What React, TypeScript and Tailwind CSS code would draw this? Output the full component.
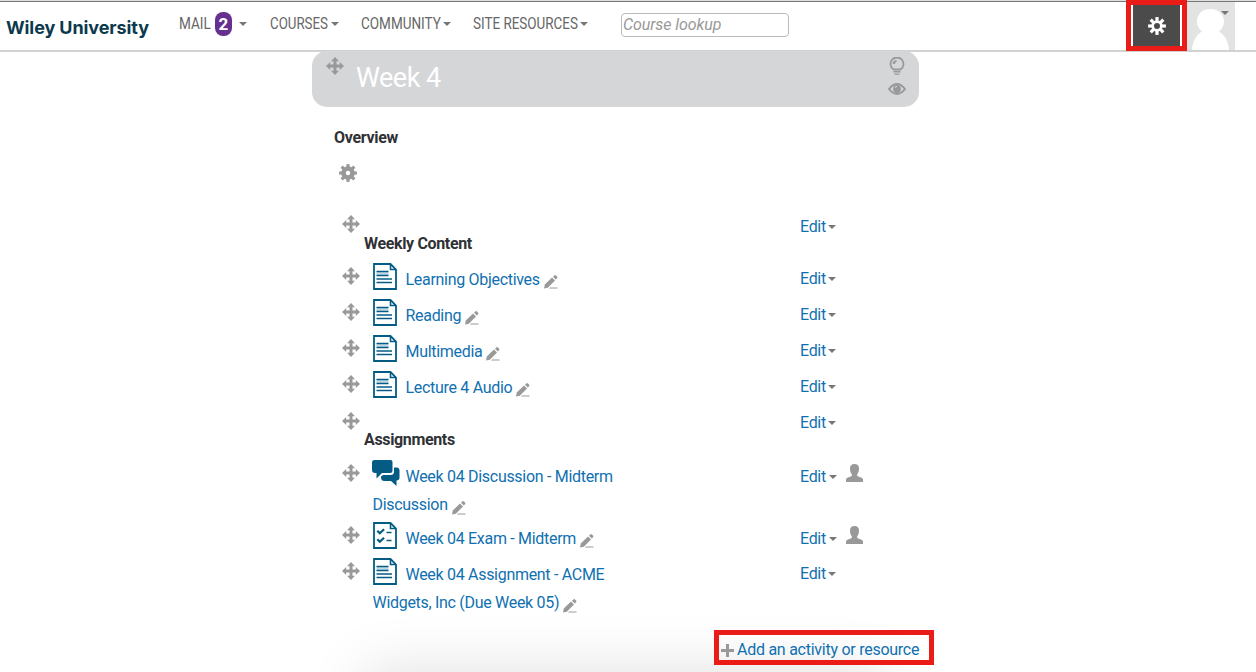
import React from "react";

function Caret({ className = "" }: { className?: string }) {
  return (
    <svg viewBox="0 0 8 4" className={`h-1 w-2 shrink-0 fill-[#777] ${className}`}>
      <path d="M0 0h8L4 4z" />
    </svg>
  );
}

function MoveIcon({ className = "" }: { className?: string }) {
  return (
    <svg viewBox="0 0 18 18" className={`size-[18px] shrink-0 fill-[#999] ${className}`}>
      <path d="M9 0l4 4.2h-2.500v3.300h3.300V5L18 9l-4.200 4v-2.500h-3.300v3.300H13L9 18l-4-4.200h2.500v-3.300H4.200V13L0 9l4.200-4v2.500h3.300V4.200H5z" />
    </svg>
  );
}

function GearIcon({ className = "", hole = 2.2 }: { className?: string; hole?: number }) {
  const outer = hole > 2.5 ? 5.7 : 6.8;
  return (
    <svg viewBox="0 0 18 18" className={`size-[18px] shrink-0 ${className}`} fill="none" stroke="currentColor">
      <circle cx="9" cy="9" r={(hole + outer) / 2} strokeWidth={outer - hole} />
      {[0, 45, 90, 135, 180, 225, 270, 315].map((angle) => (
        <path key={angle} d="M9 0.1v4" strokeWidth="3.200" transform={`rotate(${angle} 9 9)`} />
      ))}
    </svg>
  );
}

function PageIcon({ quiz = false }: { quiz?: boolean }) {
  return (
    <svg viewBox="0 0 24 27" className="h-[27px] w-6 shrink-0" fill="none" stroke="#045c84">
      <path d="M1 1h16.500L23 6.500V26H1z" strokeWidth="1.800" />
      <path d="M17.500 1v5.500H23" strokeWidth="1.600" />
      {quiz ? (
        <>
          <path d="M4.300 8.800l2.500 2.500 4.300-4M4.300 17.300l2.500 2.500 4.300-4" strokeWidth="2.200" />
          <path d="M13.500 10.500h5M13.500 18.500h5" strokeWidth="1.500" />
        </>
      ) : (
        <>
          <path d="M3.500 10.500h12" stroke="#c3dae5" strokeWidth="3" />
          <path d="M3.500 8.500h12M3.500 12.500h12M3.500 16h15.500M3.500 19.500h15.500" strokeWidth="1.400" />
        </>
      )}
    </svg>
  );
}

function ChatIcon() {
  return (
    <svg viewBox="0 0 28 26" className="-ml-px mr-[-3px] h-[26px] w-7 shrink-0 fill-[#045c84]">
      <path d="M2.500 0h16q2 0 2 2v8.500q0 2.500-2.500 2.500h-8l-5.500 5.500V13H3q-3 0-3-3V2.500Q0 0 2.500 0z" />
      <path d="M22 7.500h2.500q3 0 3 3v7q0 3-3 3V26L19 21h-6.500Q9 21 9 17.500v-1l2-1.500h7.500q3.500 0 3.500-3.500z" />
    </svg>
  );
}

function PencilIcon() {
  return (
    <svg viewBox="0 0 14 14" className="size-3.5 shrink-0 fill-[#999]">
      <path d="M0 13.500l.8-4L8 2.500l3 3L3.800 12.700z" />
      <path d="M9 1.700L10.300.4q.8-.7 1.700.1l1 1q.8.900 0 1.700L11.800 4.500zM6 12.500h7.500v1.100H5z" />
    </svg>
  );
}

function UserIcon() {
  return (
    <svg viewBox="0 0 17 18" className="ml-[9px] mt-[5px] h-[18px] w-[17px] shrink-0 fill-[#999]">
      <path d="M8.500 0C11.500 0 13 1.700 13 4.500c0 2.800-.8 4.500-1.800 5.700v1.600c1 1.200 5.800 1.800 5.800 3.700V18H0v-2.500c0-1.900 4.800-2.500 5.800-3.700v-1.600C4.800 9 4 7.300 4 4.500 4 1.700 5.500 0 8.500 0z" />
    </svg>
  );
}

function Edit({ wide = false, className = "" }: { wide?: boolean; className?: string }) {
  return (
    <button className={`flex h-5 items-center tracking-[-0.300px] text-[#1070b0] ${className}`}>
      <span className="w-[27px] text-left">Edit</span>
      <Caret className={wide ? "ml-0.5" : "ml-px"} />
    </button>
  );
}

function Heading({ children, className = "", text, edit }: { children: string; className?: string; text: string; edit: string }) {
  return (
    <li className={`flex items-start pl-[30px] ${className}`}>
      <MoveIcon />
      <h3 className={`w-[440px] pl-1 font-bold leading-5 tracking-[-0.350px] text-[#2f3135] ${text}`}>{children}</h3>
      <Edit className={edit} />
    </li>
  );
}

type Item = { kind: "page" | "quiz" | "chat"; lines: string[]; className: string; group?: boolean; move: string; edit: string };

function Activity({ kind, lines, className, group, move, edit }: Item) {
  return (
    <li className={`flex items-start pl-[30px] ${className}`}>
      <MoveIcon className={move} />
      <div className="w-[440px] pl-3">
        {lines.map((line, i) => (
          <div key={line} className={i ? "flex h-7 items-start" : "flex h-[31px] items-start pt-px"}>
            {i === 0 && (
              <span className="flex w-[33.500px] shrink-0 pl-px">{kind === "chat" ? <ChatIcon /> : <PageIcon quiz={kind === "quiz"} />}</span>
            )}
            <a className={`whitespace-nowrap leading-5 text-[#1070b0] ${i ? "mt-[5px] pl-[0.500px]" : "mt-[7px]"}`}>{line}</a>
            {i === lines.length - 1 && <span className={i ? "ml-1 mt-[11px]" : "ml-1 mt-3"}><PencilIcon /></span>}
          </div>
        ))}
      </div>
      <Edit wide={group} className={edit} />
      {group && <UserIcon />}
    </li>
  );
}

const weekly = ["Learning Objectives", "Reading", "Multimedia", "Lecture 4 Audio"];

export default function App() {
  return (
    <div className="relative isolate flex h-[672px] w-[1256px] flex-col overflow-hidden bg-white font-['Roboto',sans-serif] text-[16px] leading-5 tracking-[-0.300px]">
      <div className="pointer-events-none absolute -bottom-24 left-[365px] -z-10 h-24 w-[520px] shadow-[0_0_60px_rgba(0,0,0,0.13)]" />
      <header className="flex h-[52px] shrink-0 items-start border-b-2 border-[#d2d2d3] shadow-[inset_0_1px_#dedede,inset_0_2px_#777]">
        <a className="mt-4 w-[173px] whitespace-nowrap pl-1.5 font-['Inter',sans-serif] text-[18px] font-bold leading-6 tracking-[-0.100px] text-[#0b394d]">Wiley University</a>
        <nav className="mt-3 flex h-6 items-center tracking-normal text-[#666]">
          <a className="flex w-[97px] items-center pl-1.5">
            <span className="w-9 origin-left scale-x-[0.850] whitespace-nowrap">MAIL</span>
            <span className="flex h-6 w-[17px] items-center justify-center rounded-lg bg-[#67308f] text-[17px] font-bold text-white">2</span>
            <Caret className="ml-[7px]" />
          </a>
          <a className="flex w-[91px] items-center">
            <span className="w-[61px] origin-left scale-x-[0.830] whitespace-nowrap">COURSES</span>
            <Caret />
          </a>
          <a className="flex w-[112px] items-center">
            <span className="w-[82px] origin-left scale-x-[0.845] whitespace-nowrap">COMMUNITY</span>
            <Caret />
          </a>
          <a className="flex w-[148px] items-center">
            <span className="w-[107px] origin-left scale-x-[0.840] whitespace-nowrap">SITE RESOURCES</span>
            <Caret />
          </a>
        </nav>
        <input placeholder="Course lookup" className="mt-[13px] h-6 w-[168px] rounded border border-[#bbb] px-px pb-0.5 text-[16px] italic tracking-[-0.100px] outline-none placeholder:text-[#999]" />
        <button className="ml-auto flex h-[51px] w-[61px] shrink-0 justify-center border-5 border-[#e91c17] bg-white px-0.5">
          <span className="flex h-full w-12 items-center justify-center bg-[#4b4b4b] text-white"><GearIcon hole={3} /></span>
        </button>
        <button className="mr-[21px] mt-0.5 flex h-12 w-12 shrink-0 justify-end bg-[#e3e3e3]">
          <svg viewBox="0 0 48 48" className="size-12">
            <path d="M24 7a12.500 12.500 0 0 1 8 22.500C38 33 41.500 40 42 48H5c.5-8 4-15 10-18.500A12.500 12.500 0 0 1 24 7z" fill="#fff" />
            <path d="M34 9h8l-4 4z" fill="#777" />
          </svg>
        </button>
      </header>
      <main className="ml-[312px] w-[630px] grow">
        <div className="-mt-px flex h-14 w-[607px] items-start rounded-[15px] bg-[#d5d6d8]">
          <MoveIcon className="ml-[14px] mt-1.5" />
          <h2 className="ml-3 mt-[11px] grow text-[27px] leading-8 tracking-[-0.500px] text-white">Week 4</h2>
          <div className="mr-[13px] mt-1.5 flex flex-col items-center gap-2 text-[#999]">
            <svg viewBox="0 0 16 18" className="h-[18px] w-4" fill="none" stroke="currentColor">
              <path d="M4.500 12.500a6.500 6.500 0 1 1 7 0z" strokeWidth="1.800" />
              <path d="M4.800 7Q4.800 4.300 7.500 4" strokeWidth="2.200" />
              <path d="M4.500 14.800h7M5.500 17.100h5" strokeWidth="1.400" />
            </svg>
            <svg viewBox="0 0 18 12" className="h-3 w-[18px]" fill="none" stroke="currentColor">
              <path d="M1 6Q9-4 17 6Q9 16 1 6z" strokeWidth="2" />
              <circle cx="9" cy="6" r="3.900" fill="currentColor" stroke="none" />
              <path d="M7 5Q7.500 3.500 9 3.500" stroke="#d5d6d8" />
            </svg>
          </div>
        </div>
        <h3 className="mt-[21px] pl-[22px] font-bold text-[#2f3135]">Overview</h3>
        <GearIcon className="ml-[27px] mt-4 text-[#999]" />
        <ul className="mt-[33px]">
          <Heading className="h-[47px]" text="mt-[19px]" edit="mt-0.5">Weekly Content</Heading>
          {weekly.map((name) => (
            <Activity key={name} kind="page" lines={[name]} className="h-9" move="mt-[5px]" edit="mt-[7px]" />
          ))}
          <Heading className="mt-[6px] h-[47px]" text="mt-[18px]" edit="mt-px">Assignments</Heading>
          <Activity kind="chat" lines={["Week 04 Discussion - Midterm", "Discussion"]} className="h-[62px]" group move="mt-[5px]" edit="mt-2" />
          <Activity kind="quiz" lines={["Week 04 Exam - Midterm"]} className="h-9" group move="mt-[5px]" edit="mt-2" />
          <Activity kind="page" lines={["Week 04 Assignment - ACME", "Widgets, Inc (Due Week 05)"]} className="h-[73px]" move="mt-[5px]" edit="mt-[7px]" />
        </ul>
        <a className="ml-[402px] flex h-[35px] w-[220px] items-center border-5 border-[#e91c17] pl-0.5 tracking-[-0.260px] text-[#1070b0]">
          <svg viewBox="0 0 13 13" className="mt-1.5 size-[13px] fill-[#999]"><path d="M5 0h3v5h5v3H8v5H5V8H0V5h5z" /></svg>
          <span className="ml-[3px] mt-1 whitespace-nowrap">Add an activity or resource</span>
        </a>
      </main>
    </div>
  );
}
